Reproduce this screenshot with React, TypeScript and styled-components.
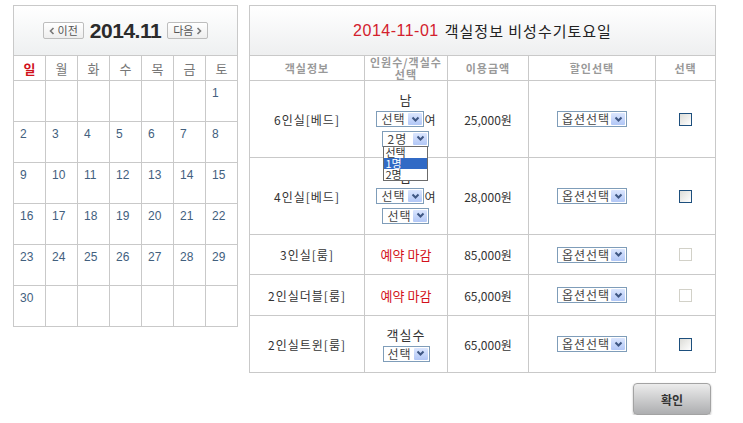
import styled, { createGlobalStyle } from "styled-components";

const GlobalStyle = createGlobalStyle`
  body {
    margin: 0;
    background: #fff;
    font-family: "Noto Sans CJK KR", "Liberation Sans", sans-serif;
  }
`;

const weeks: (number | null)[][] = [
    [null, null, null, null, null, null, 1],
    [2, 3, 4, 5, 6, 7, 8],
    [9, 10, 11, 12, 13, 14, 15],
    [16, 17, 18, 19, 20, 21, 22],
    [23, 24, 25, 26, 27, 28, 29],
    [30, null, null, null, null, null, null],
];

const dayNames = ["일", "월", "화", "수", "목", "금", "토"];

const Chevron = ({ dir = "down" }: { dir?: "down" | "left" | "right" }) => {
    if (dir === "down") {
        return (
            <svg width="9" height="7" viewBox="0 0 9 7">
                <path d="M1.5 1.5 L4.5 4.5 L7.5 1.5" fill="none" stroke="#3f5783" strokeWidth="2" />
            </svg>
        );
    }
    const d = dir === "left" ? "M4.5 1 L1.5 4 L4.5 7" : "M1.5 1 L4.5 4 L1.5 7";
    return (
        <svg width="6" height="8" viewBox="0 0 6 8">
            <path d={d} fill="none" stroke="#777" strokeWidth="1.6" />
        </svg>
    );
};

const Select = ({ label, width, open }: { label: string; width: number; open?: boolean }) => (
    <SelectBox $w={width}>
        <span>{label}</span>
        <Arrow>
            <Chevron />
        </Arrow>
        {open && (
            <DropList>
                <DropItem>선택</DropItem>
                <DropItem $active>1명</DropItem>
                <DropItem>2명</DropItem>
            </DropList>
        )}
    </SelectBox>
);

const rooms = [
    { name: "6인실[베드]", kind: "gender", price: "25,000원", open: true },
    { name: "4인실[베드]", kind: "gender", price: "28,000원" },
    { name: "3인실[룸]", kind: "closed", price: "85,000원" },
    { name: "2인실더블[룸]", kind: "closed", price: "65,000원" },
    { name: "2인실트윈[룸]", kind: "rooms", price: "65,000원" },
];

const App = () => {
    return (
        <>
            <GlobalStyle />
            <Page>
                <Calendar>
                    <CalHeader>
                        <NavButton>
                            <Chevron dir="left" />
                            이전
                        </NavButton>
                        <MonthTitle>2014.11</MonthTitle>
                        <NavButton>
                            다음
                            <Chevron dir="right" />
                        </NavButton>
                    </CalHeader>
                    {dayNames.map((d, i) => (
                        <DayName key={d} $sunday={i === 0}>
                            {d}
                        </DayName>
                    ))}
                    {weeks.flat().map((n, i) => (
                        <DateCell key={i}>{n ?? ""}</DateCell>
                    ))}
                </Calendar>

                <RightColumn>
                    <RoomTable>
                        <TableTitle>
                            <em>2014-11-01</em> 객실정보 비성수기토요일
                        </TableTitle>
                        <ColHead>객실정보</ColHead>
                        <ColHead>
                            인원수/객실수
                            <br />
                            선택
                        </ColHead>
                        <ColHead>이용금액</ColHead>
                        <ColHead>할인선택</ColHead>
                        <ColHead>선택</ColHead>

                        {rooms.map((r) => (
                            <Row key={r.name}>
                                <Cell>{r.name}</Cell>
                                <Cell>
                                    {r.kind === "gender" && (
                                        <Stack>
                                            <Label>남</Label>
                                            <Inline>
                                                <Select label="선택" width={48} />
                                                <span>여</span>
                                            </Inline>
                                            <Select
                                                label={r.open ? "2명" : "선택"}
                                                width={47}
                                                open={r.open}
                                            />
                                        </Stack>
                                    )}
                                    {r.kind === "closed" && <Closed>예약 마감</Closed>}
                                    {r.kind === "rooms" && (
                                        <Stack>
                                            <Label>객실수</Label>
                                            <Select label="선택" width={47} />
                                        </Stack>
                                    )}
                                </Cell>
                                <Price>{r.price}</Price>
                                <Cell>
                                    <Select label="옵션선택" width={70} />
                                </Cell>
                                <Cell>
                                    <Check $disabled={r.kind === "closed"} />
                                </Cell>
                            </Row>
                        ))}
                    </RoomTable>
                    <ConfirmButton>확인</ConfirmButton>
                </RightColumn>
            </Page>
        </>
    );
};

const Page = styled.div`
    display: flex;
    align-items: flex-start;
    gap: 11px;
    padding: 5px 0 0 13px;
`;

const Calendar = styled.div`
    display: grid;
    grid-template-columns: repeat(7, 31px);
    grid-template-rows: 49px 24px repeat(6, 40px);
    gap: 1px;
    padding: 1px;
    background: #c9c9c9;
`;

const CalHeader = styled.div`
    grid-column: 1 / -1;
    display: flex;
    align-items: center;
    justify-content: center;
    gap: 6px;
    background: linear-gradient(#ffffff, #eef0f1);
`;

const NavButton = styled.span`
    display: inline-flex;
    align-items: center;
    gap: 3px;
    height: 15px;
    padding: 0 5px;
    border: 1px solid #bdbdbd;
    border-radius: 2px;
    background: linear-gradient(#ffffff, #eeeeee);
    font-size: 11px;
    color: #555;
    line-height: 15px;
`;

const MonthTitle = styled.span`
    font-family: "Liberation Sans", sans-serif;
    font-size: 21px;
    font-weight: bold;
    color: #2b2b2b;
    letter-spacing: -0.5px;
`;

const DayName = styled.div<{ $sunday?: boolean }>`
    display: flex;
    align-items: center;
    justify-content: center;
    background: #fff;
    font-size: 13px;
    font-weight: ${(p) => (p.$sunday ? "bold" : "normal")};
    color: ${(p) => (p.$sunday ? "#d0111b" : "#777")};
`;

const DateCell = styled.div`
    background: #fff;
    padding: 5px 0 0 6px;
    font-family: "Liberation Sans", sans-serif;
    font-size: 12px;
    color: #42607e;
`;

const RightColumn = styled.div`
    display: flex;
    flex-direction: column;
    align-items: flex-end;
    gap: 10px;
`;

const RoomTable = styled.div`
    display: grid;
    grid-template-columns: 114px 82px 80px 126px 59px;
    grid-template-rows: 49px 24px 76px 76px 39px 40px 56px;
    gap: 1px;
    padding: 1px;
    background: #c9c9c9;
`;

const TableTitle = styled.div`
    grid-column: 1 / -1;
    display: flex;
    align-items: center;
    justify-content: center;
    gap: 6px;
    background: linear-gradient(#ffffff, #eeeff0);
    font-size: 15px;
    letter-spacing: 1px;
    color: #222;

    em {
        font-style: normal;
        font-family: "Liberation Sans", sans-serif;
        font-size: 16px;
        letter-spacing: 0.5px;
        color: #d3202c;
    }
`;

const ColHead = styled.div`
    display: flex;
    align-items: center;
    justify-content: center;
    text-align: center;
    background: #fff;
    font-size: 11px;
    font-weight: bold;
    line-height: 12px;
    letter-spacing: 1px;
    color: #999;
`;

const Row = styled.div`
    display: contents;
`;

const Cell = styled.div`
    display: flex;
    align-items: center;
    justify-content: center;
    background: #fff;
    font-size: 12px;
    letter-spacing: 1px;
    color: #333;
`;

const Price = styled(Cell)`
    letter-spacing: 0;
`;

const Stack = styled.div`
    display: flex;
    flex-direction: column;
    align-items: center;
    gap: 3px;
`;

const Label = styled.span`
    height: 16px;
    line-height: 16px;
    font-size: 13px;
`;

const Inline = styled.div`
    display: flex;
    align-items: center;
    font-size: 12px;
    letter-spacing: 0;
`;

const Closed = styled.span`
    font-size: 13px;
    letter-spacing: 0;
    color: #d3111b;
`;

const SelectBox = styled.span<{ $w: number }>`
    position: relative;
    display: inline-flex;
    align-items: center;
    justify-content: space-between;
    box-sizing: border-box;
    width: ${(p) => p.$w}px;
    height: 16px;
    padding: 0 1px 0 4px;
    border: 1px solid #7f9db9;
    background: #fff;
    font-size: 12px;
    line-height: 14px;
    color: #444;
    letter-spacing: 1px;
`;

const Arrow = styled.span`
    display: flex;
    align-items: center;
    justify-content: center;
    width: 14px;
    height: 12px;
    border-radius: 1px;
    background: linear-gradient(#dbe6fe, #b2c7f6);
`;

const DropList = styled.div`
    position: absolute;
    z-index: 5;
    top: 100%;
    left: 0;
    right: 0;
    box-sizing: border-box;
    border: 1px solid #6b6b6b;
    background: #fff;
    letter-spacing: 0;
`;

const DropItem = styled.div<{ $active?: boolean }>`
    height: 11px;
    line-height: 11px;
    padding-left: 1px;
    font-size: 11px;
    color: ${(p) => (p.$active ? "#fff" : "#333")};
    background: ${(p) => (p.$active ? "#316ac5" : "#fff")};
`;

const Check = styled.span<{ $disabled?: boolean }>`
    display: block;
    box-sizing: border-box;
    width: 13px;
    height: 13px;
    border: 1px solid ${(p) => (p.$disabled ? "#d2d1c8" : "#1d4f7d")};
    background: ${(p) => (p.$disabled ? "#fff" : "linear-gradient(135deg, #dcdcd7, #ffffff)")};
`;

const ConfirmButton = styled.button`
    width: 78px;
    height: 32px;
    margin-right: 5px;
    border: 1px solid #a3a3a3;
    border-radius: 4px;
    background: linear-gradient(#ececec, #adaeb0);
    box-shadow: 0 1px 2px rgba(0, 0, 0, 0.3);
    font-family: "Noto Sans CJK KR", sans-serif;
    font-size: 12px;
    font-weight: bold;
    color: #333;
`;

export default App;
